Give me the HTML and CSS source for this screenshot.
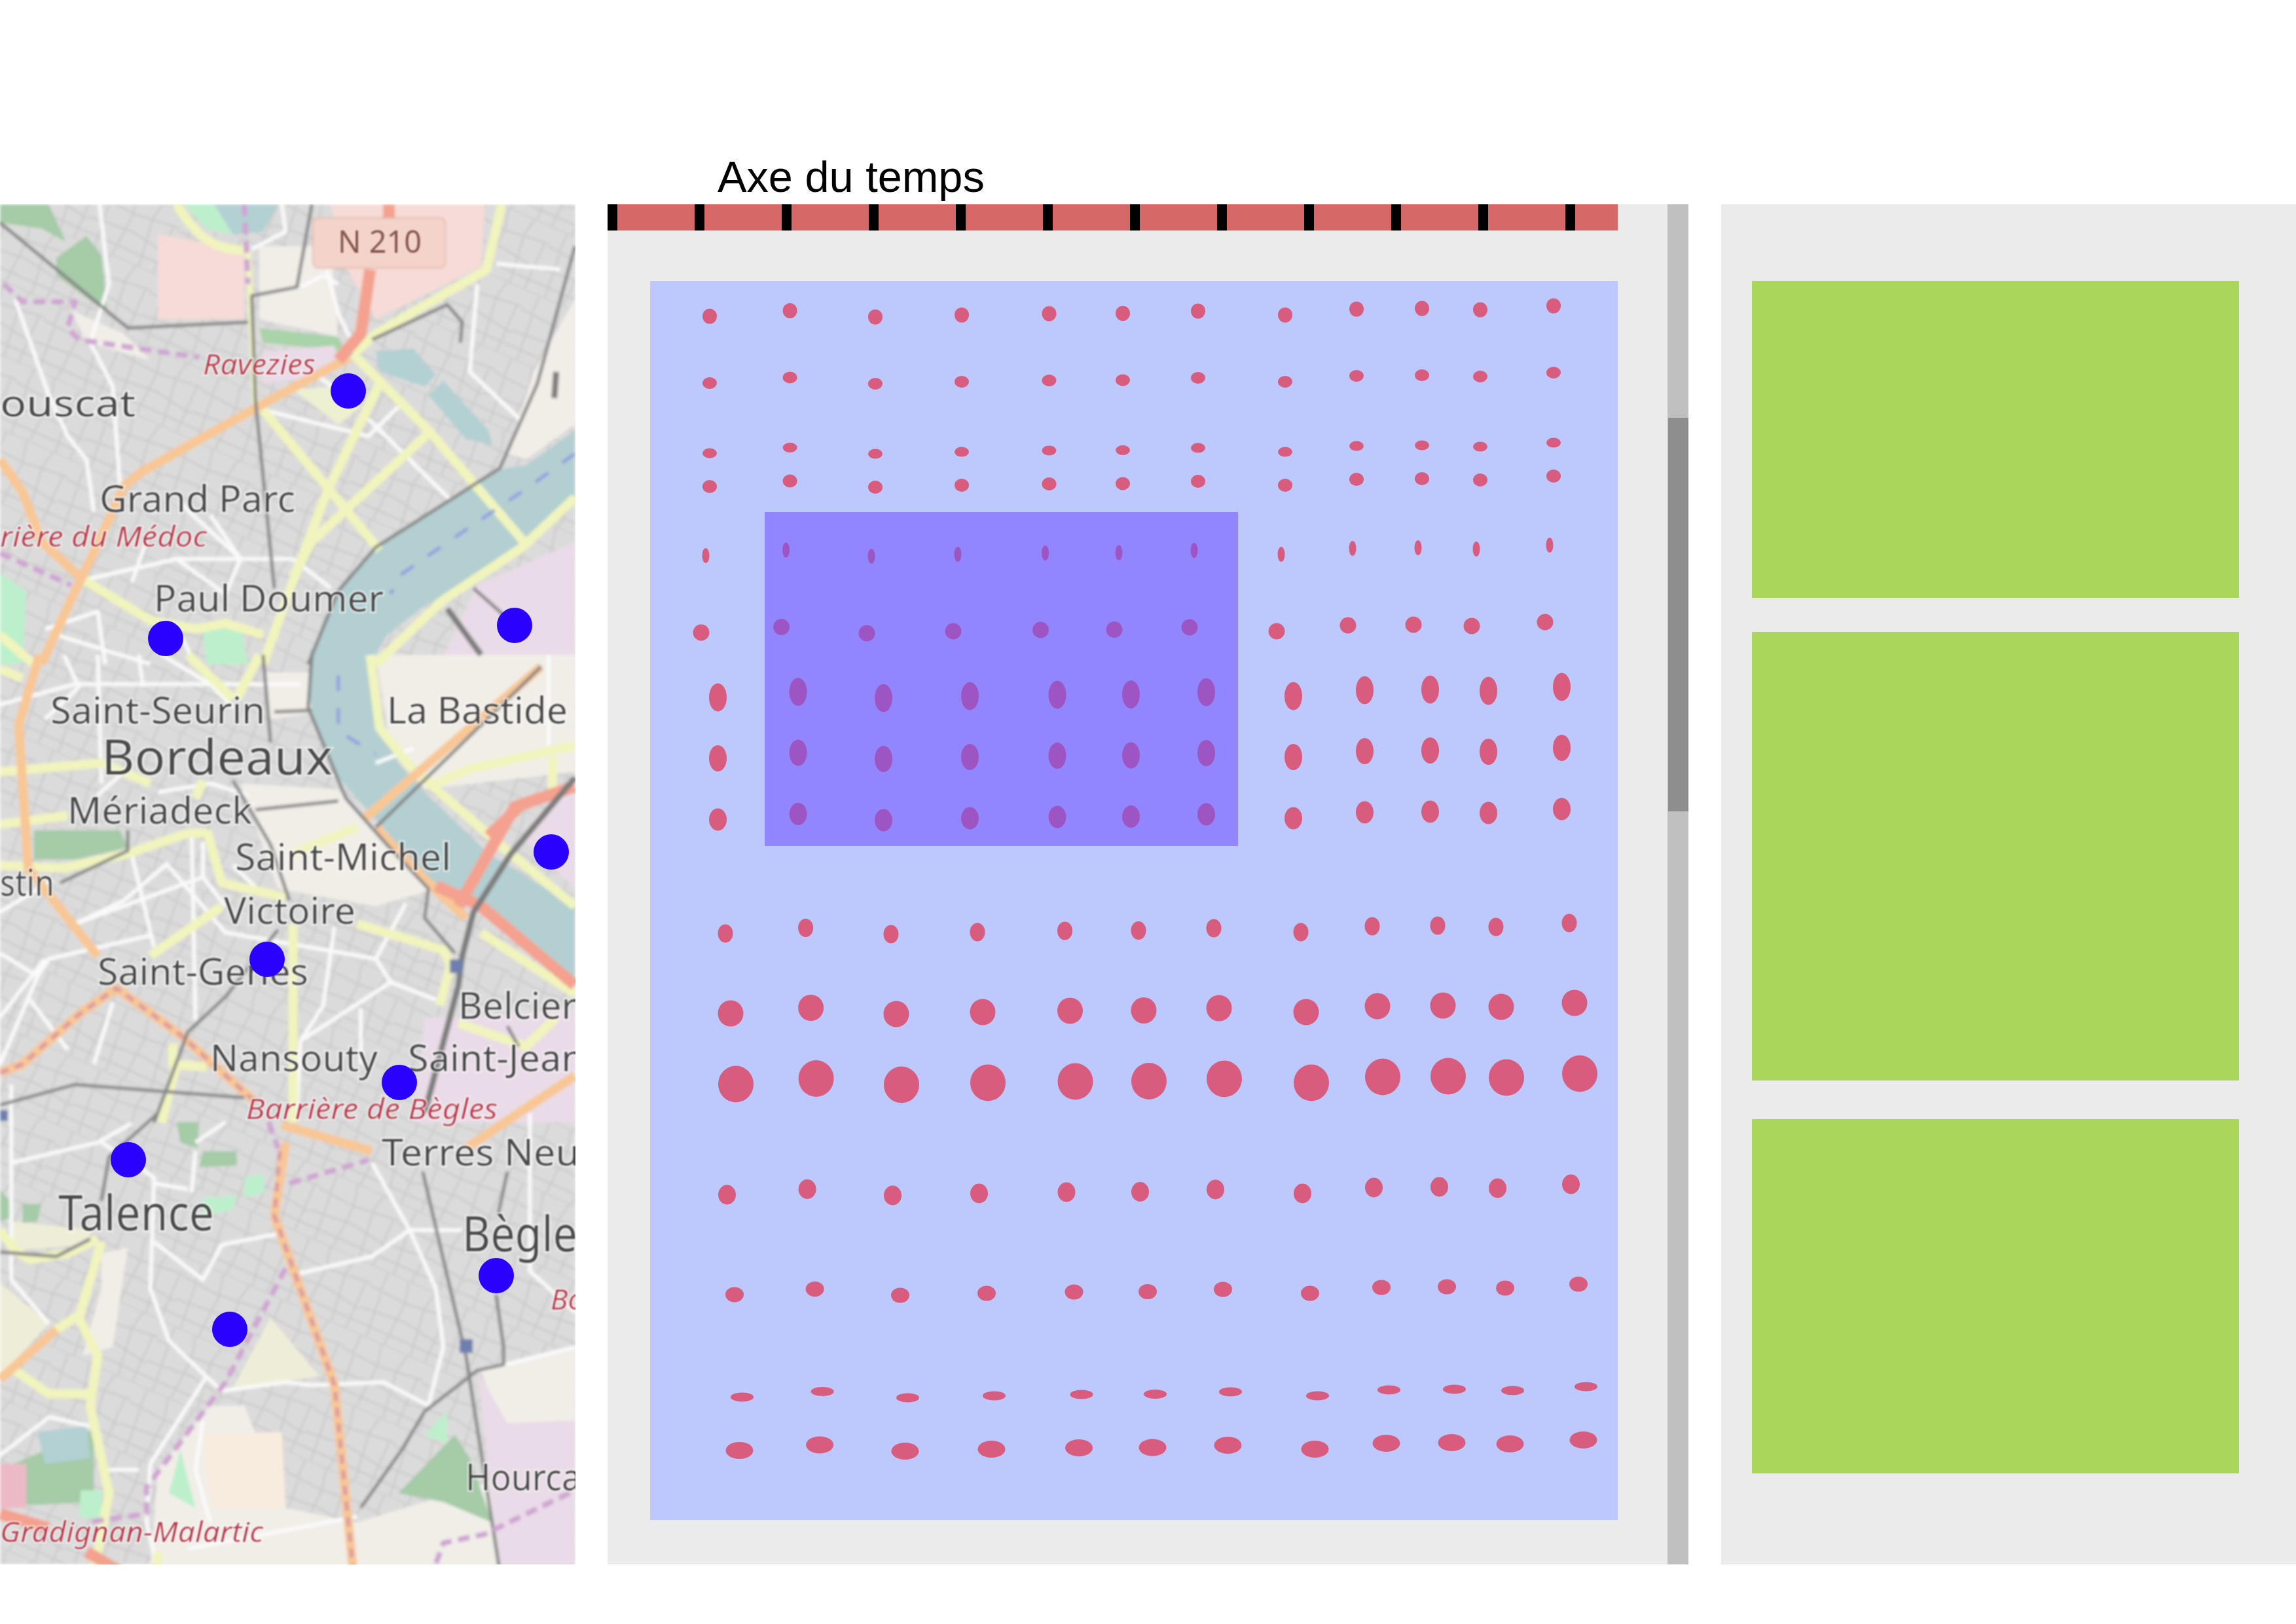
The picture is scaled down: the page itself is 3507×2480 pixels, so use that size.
FILE: index.html
```html
<!DOCTYPE html>
<html lang="fr">
<head>
    <meta charset="UTF-8">
    <title>Axe du temps</title>
    <link rel="stylesheet" href="styles.css">
</head>
<body>
    <header class="top">
        <h1 class="axis-title">Axe du temps</h1>
    </header>
    <main class="board">
        <section class="map">
            <svg class="map-svg" viewBox="0 0 879 2077" width="879" height="2077">
                <defs>
                    <filter id="soft" x="0" y="0" width="100%" height="100%"><feGaussianBlur stdDeviation="2.2"/></filter>
                    <filter id="soft-text" x="-5%" y="-5%" width="110%" height="110%"><feGaussianBlur stdDeviation="1.1"/></filter>
                    <pattern id="blocks" width="132" height="104" patternUnits="userSpaceOnUse" patternTransform="rotate(24)">
                        <path class="block-line" d="M0 0H132M0 30L60 34L132 26M0 66L70 60L132 70M18 0V30M52 0L60 34L56 104M96 0L90 28L100 104M20 34L26 104M124 26V104M0 88H132"/>
                    </pattern>
                </defs>

                <g filter="url(#soft)">
                    <rect class="land" width="879" height="2077"/>
                    <rect class="land-blocks" width="879" height="2077"/>

                    <!-- areas, top part -->
                    <g transform="matrix(.574 0 0 .4464 0 -12)">
                        <path class="a-forest" d="M150 210L230 135L270 200L285 380L270 385L150 270Z"/>
                        <path class="a-forest" d="M0 27H130L175 155L110 110L0 90Z"/>
                        <path class="a-mint" d="M490 27H570L620 130L550 110Z"/>
                        <path class="a-water" d="M570 27H740L700 120L620 130Z"/>
                        <path class="a-pink" d="M420 130L650 180V420L420 420Z"/>
                        <path class="a-pink" d="M880 27H1290L1280 240L1000 420L920 240Z"/>
                        <path class="a-paper" d="M690 170L880 170L900 480L690 420Z"/>
                        <path class="a-paper" d="M190 390L330 470L400 560L230 500Z"/>
                        <path class="a-green" d="M690 450L900 480L920 530L700 500Z"/>
                        <path class="a-lilac" d="M700 530L890 510L900 570L840 620L700 640Z"/>
                        <path class="a-paper" d="M1420 600L1530 350V780L1400 900L1350 880Z"/>
                        <path class="a-water" d="M1000 530L1100 520L1160 610L1130 650L1010 600Z"/>
                        <path class="a-water" d="M1180 630L1300 800L1310 850L1240 830L1140 680Z"/>
                        <path class="a-river" d="M1530 800L1400 920L1340 930L1200 1040L1030 1170L920 1310L860 1450L825 1600H985L1030 1500L1130 1400L1280 1290L1400 1190L1530 1020Z"/>
                        <path class="a-lilac" d="M1270 1330L1530 1180V1600H1170Z"/>
                        <path class="a-mint" d="M0 1290L70 1350L60 1600H0Z"/>
                        <path class="a-mint" d="M540 1490L640 1470L660 1600H550Z"/>
                        <path class="a-lime" d="M780 660L900 650L960 720L900 780Z"/>
                    </g>

                    <!-- areas, middle part -->
                    <g transform="matrix(.574 0 0 .4464 0 688)">
                        <path class="a-paper" d="M1000 0H1530V400L1130 460L1040 320Z"/>
                        <path class="a-paper" d="M640 440L900 460L1020 620L1160 800L1000 860L740 800Z"/>
                        <path class="a-paper" d="M700 60L820 60L830 200L720 220Z"/>
                        <path class="a-forest" d="M90 600H320L340 660L200 700H90Z"/>
                        <path class="a-river" d="M825 -20H985C975 100 1000 220 1060 370L1130 470L1300 680L1530 860V1130L1290 870L1240 860L1140 780L1020 590L900 420L840 250L820 120Z"/>
                        <path class="a-lilac" d="M1420 560L1530 440V800L1400 640Z"/>
                        <path class="a-lilac" d="M1130 1240L1220 1240L1530 1210V1600H1100Z"/>
                    </g>

                    <!-- areas, bottom part -->
                    <g transform="matrix(.574 0 0 .4464 0 1388)">
                        <path class="a-paper" d="M560 1000H650L760 1350L950 1400V1568H400L420 1220Z"/>
                        <path class="a-ivory" d="M620 940L720 700L850 900Z"/>
                        <path class="a-peach" d="M540 1100L750 1090L760 1350L560 1350Z"/>
                        <path class="a-paper" d="M950 1400L1330 1250V1568H950Z"/>
                        <path class="a-paper" d="M1280 880L1530 800V1080L1330 1060Z"/>
                        <path class="a-lilac" d="M1270 880L1350 1060L1530 1050V1568H1330Z"/>
                        <path class="a-forest" d="M0 1220L250 1080L250 1330L90 1340L0 1340Z"/>
                        <path class="a-forest" d="M1060 1300L1210 1100L1250 1180L1310 1400L1180 1330Z"/>
                        <path class="a-mint" d="M1130 1100L1190 1020V1130Z"/>
                        <path class="a-mint" d="M480 1150L520 1350L450 1300Z"/>
                        <path class="a-mint" d="M540 290L630 280L620 330L540 350Z"/>
                        <path class="a-mint" d="M650 220L700 205L705 270L650 290Z"/>
                        <path class="a-mint" d="M215 1290L270 1290L270 1390L210 1380Z"/>
                        <path class="a-rose" d="M0 1200H70V1350H0Z"/>
                        <path class="a-ivory" d="M0 580L130 720L0 900Z"/>
                        <path class="a-ivory" d="M30 370L250 400L220 450L30 470Z"/>
                        <path class="a-paper" d="M270 480L340 460L300 800L220 830L270 600Z"/>
                        <path class="a-forest" d="M0 260L25 300L25 360L0 370Z"/>
                        <path class="a-forest" d="M60 310L110 310L100 370L60 375Z"/>
                        <path class="a-water" d="M100 1090L230 1070L240 1180L120 1200Z"/>
                        <path class="a-forest" d="M540 130L630 130L630 180L530 185Z"/>
                        <path class="a-forest" d="M470 30L530 30L525 120L480 100Z"/>
                    </g>

                    <!-- streets -->
                    <g class="streets" transform="matrix(.574 0 0 .4464 0 -12)">
                        <path d="M265 27L290 300L240 500L300 650L320 1000"/>
                        <path d="M40 350L130 680L180 820L230 900L250 1080"/>
                        <path d="M700 730L980 820L1060 720"/>
                        <path d="M980 760L1200 1040"/>
                        <path d="M1320 230L1490 250"/>
                        <path d="M1270 300L1250 600L1390 770"/>
                        <path d="M840 610L930 690"/>
                        <path d="M230 1310L470 1240H780"/>
                        <path d="M470 1240L600 1360L640 1240L480 1050"/>
                        <path d="M870 250L900 400L930 480"/>
                        <path d="M400 1600L150 1500"/>
                        <path d="M780 1240L880 1340"/>
                        <path d="M670 180L760 120L750 27"/>
                        <path d="M800 310L860 270L900 300"/>
                        <path d="M390 1180L350 1320"/>
                        <path d="M560 1090L640 1240"/>
                        <path d="M120 1480L260 1420L280 1600"/>
                        <path d="M480 1500L520 1600"/>
                    </g>
                    <g class="streets" transform="matrix(.574 0 0 .4464 0 688)">
                        <path d="M260 0L270 440"/>
                        <path d="M370 0L380 110"/>
                        <path d="M0 170L200 100H800"/>
                        <path d="M350 680L410 1000"/>
                        <path d="M540 640V760L200 920"/>
                        <path d="M440 710L600 950L1000 1040L1040 1120L1160 1180"/>
                        <path d="M1040 1120L800 1320"/>
                        <path d="M120 1040L0 1240"/>
                        <path d="M0 1020L100 1100L130 1040L400 960"/>
                        <path d="M510 600L520 1250"/>
                        <path d="M1000 1040L1080 850"/>
                        <path d="M890 930L860 1200L800 1320"/>
                        <path d="M1100 320L1000 370"/>
                        <path d="M960 1210V1400"/>
                        <path d="M30 1470V1600"/>
                        <path d="M430 0L560 100L620 180"/>
                        <path d="M330 400L260 480"/>
                        <path d="M440 720L330 840L200 920"/>
                        <path d="M1460 0V310"/>
                        <path d="M0 1400L120 1040"/>
                        <path d="M170 0L210 110L120 220"/>
                        <path d="M420 470L560 440L660 480"/>
                        <path d="M0 880L140 770"/>
                        <path d="M620 720L700 820"/>
                        <path d="M540 760L600 860"/>
                        <path d="M800 1320L790 1568"/>
                        <path d="M300 1190L250 1400"/>
                        <path d="M80 1180L180 1350"/>
                    </g>
                    <g class="streets" transform="matrix(.574 0 0 .4464 0 1388)">
                        <path d="M30 0V570L130 720"/>
                        <path d="M30 170L260 100L350 35"/>
                        <path d="M270 100L410 220L400 600L450 780L590 950"/>
                        <path d="M410 240L500 260"/>
                        <path d="M410 440L540 570L590 450L750 410"/>
                        <path d="M520 100L600 30"/>
                        <path d="M510 270L520 130"/>
                        <path d="M990 170L1090 400L1160 600L1180 800L1140 1000"/>
                        <path d="M1090 400L990 490L790 550"/>
                        <path d="M1090 400H1230"/>
                        <path d="M590 950L760 920L830 930L1020 920L1140 1000"/>
                        <path d="M550 900L400 1200L390 1400L420 1568"/>
                        <path d="M540 1050L520 1220L560 1400"/>
                        <path d="M0 1170L130 1040L240 1070"/>
                        <path d="M280 1220H370"/>
                        <path d="M500 1490L950 1380"/>
                        <path d="M1280 880L1530 800"/>
                        <path d="M1410 0V540L1530 680"/>
                    </g>

                    <!-- main roads -->
                    <g class="rd-yellow" transform="matrix(.574 0 0 .4464 0 -12)">
                        <path d="M470 27C520 130 560 180 650 185"/>
                        <path class="thin" d="M660 185L680 730"/>
                        <path d="M1335 27L1295 250L1000 470L940 540"/>
                        <path d="M940 540L1140 800L1400 1190"/>
                        <path d="M700 730L1010 1210"/>
                        <path d="M1010 640L870 1010L770 1350L700 1600"/>
                        <path d="M1140 810L830 1180L780 1300"/>
                        <path d="M1530 1030L1390 1200L1180 1380L1000 1600"/>
                        <path d="M220 1310L400 1450L520 1480L600 1460L700 1500"/>
                        <path d="M0 1500L90 1600"/>
                    </g>
                    <g class="rd-yellow" transform="matrix(.574 0 0 .4464 0 688)">
                        <path d="M500 0L620 150"/>
                        <path d="M690 0L630 150"/>
                        <path d="M0 50L60 80"/>
                        <path d="M0 400L270 370L400 440"/>
                        <path d="M0 580L180 550"/>
                        <path d="M0 720L170 730L340 680L500 610H550"/>
                        <path d="M550 600L590 780L760 830"/>
                        <path d="M400 1030L590 860"/>
                        <path d="M950 920L1180 1010L1200 1060L1170 1200"/>
                        <path d="M780 920V1600"/>
                        <path d="M780 680L950 590"/>
                        <path d="M985 0L1010 250L1090 380L1340 660L1530 860"/>
                        <path d="M1140 450L1250 390L1530 310"/>
                        <path d="M1470 350V470"/>
                        <path d="M1280 950L1530 1160"/>
                        <path d="M1220 1260L1400 1340L1480 1240"/>
                        <path d="M460 1330V1400L550 1410"/>
                        <path d="M430 1600L470 1400"/>
                        <path d="M540 430L520 490"/>
                    </g>
                    <g class="rd-yellow" transform="matrix(.574 0 0 .4464 0 1388)">
                        <path d="M0 400L40 470L80 500L180 480L260 430"/>
                        <path d="M270 440L210 700L260 830L240 1000L290 1300L250 1568"/>
                        <path d="M40 880L130 960H240"/>
                        <path d="M150 740L210 690"/>
                        <path d="M420 1500V1568"/>
                    </g>

                    <g class="rd-orange" transform="matrix(.574 0 0 .4464 0 -12)">
                        <path d="M930 550L700 710L380 940L330 990L260 1190L200 1350L110 1600"/>
                        <path d="M0 900L60 1010L110 1180L220 1310"/>
                    </g>
                    <g class="rd-orange" transform="matrix(.574 0 0 .4464 0 688)">
                        <path d="M105 0L50 240L75 730L260 1030"/>
                        <path class="inner" d="M0 1430L60 1400L210 1230L310 1140L480 1300L680 1530"/>
                        <path d="M1440 40L970 560"/>
                        <path d="M1000 590L1140 780L1240 900"/>
                        <path d="M1380 1568L1530 1440"/>
                    </g>
                    <g class="rd-orange" transform="matrix(.574 0 0 .4464 0 1388)">
                        <path d="M750 40L990 130"/>
                        <path d="M760 100L730 350L890 930L940 1568"/>
                        <path d="M0 910L150 740"/>
                        <path d="M1240 120L1380 0"/>
                    </g>
                    <g class="rd-dash" transform="matrix(.574 0 0 .4464 0 1388)">
                        <path d="M745 130L730 350L890 930L940 1568"/>
                    </g>
                    <g class="rd-dash" transform="matrix(.574 0 0 .4464 0 688)">
                        <path d="M0 1430L60 1400L210 1230L310 1140L480 1300L680 1530"/>
                    </g>

                    <g class="rd-salmon" transform="matrix(.574 0 0 .4464 0 -12)">
                        <path d="M1035 27V80"/>
                        <path d="M985 250L960 470L900 560"/>
                    </g>
                    <g class="rd-salmon" transform="matrix(.574 0 0 .4464 0 688)">
                        <path d="M1530 450L1370 520L1220 860"/>
                        <path d="M1390 510L1300 620"/>
                        <path d="M1160 790L1280 860L1530 1130"/>
                    </g>
                    <g class="rd-salmon" transform="matrix(.574 0 0 .4464 0 1388)">
                        <path d="M0 1370L130 1420"/>
                        <path d="M230 1500L320 1568"/>
                    </g>

                    <!-- rail and tram -->
                    <g class="rail" transform="matrix(.574 0 0 .4464 0 -12)">
                        <path d="M0 90L340 450L660 430"/>
                        <path d="M830 27L790 310L670 340L680 700L730 1340"/>
                        <path d="M990 490L1190 370L1230 430L1225 500"/>
                        <path d="M1530 170L1430 640L1330 930L1000 1200L900 1350L820 1600"/>
                        <path d="M1260 1340L1400 1500"/>
                        <path class="thick" d="M1190 1410L1280 1568"/>
                        <path class="thick" d="M1480 600L1475 690"/>
                    </g>
                    <g class="rail" transform="matrix(.574 0 0 .4464 0 688)">
                        <path class="thick" d="M1530 420L1360 680L1260 880L1230 1030L1220 1130L1130 1568"/>
                        <path d="M830 0L820 180L920 490L1030 650L1140 800L1130 900L1210 1020"/>
                        <path d="M700 0L720 300"/>
                        <path d="M620 430L720 650L770 840"/>
                        <path d="M340 600V670L160 780"/>
                        <path d="M680 530L900 500"/>
                        <path d="M0 1540L200 1470L650 1515"/>
                        <path d="M740 940L600 1170L500 1290L410 1600"/>
                        <path d="M730 195L830 190"/>
                        <path d="M1000 590L1440 40"/>
                        <path d="M1350 1270L1380 1340"/>
                    </g>
                    <g class="rail" transform="matrix(.574 0 0 .4464 0 1388)">
                        <path d="M420 0L290 150L270 300"/>
                        <path d="M0 475L150 490L240 430"/>
                        <path d="M1125 200L1240 830L1330 1568"/>
                        <path d="M1350 200L1325 350"/>
                        <path d="M1320 620L1340 800V860L1270 880L1130 1020L1070 1150L960 1350"/>
                    </g>

                    <g class="tram" transform="matrix(.574 0 0 .4464 0 -12)">
                        <path d="M10 300L60 360H200L180 450L210 490L420 530L530 550"/>
                        <path d="M0 1220L190 1330"/>
                        <path d="M650 27L660 300"/>
                    </g>
                    <g class="tram" transform="matrix(.574 0 0 .4464 0 1388)">
                        <path d="M715 30L740 120"/>
                        <path d="M770 240L980 160"/>
                        <path d="M760 530L600 920L390 1280V1370L230 1400"/>
                        <path d="M1160 1540L1180 1470L1290 1440L1530 1290"/>
                    </g>

                    <g class="river-flow" transform="matrix(.574 0 0 .4464 0 -12)">
                        <path d="M1530 880L1400 1000L1160 1210L1060 1300L1040 1360"/>
                    </g>
                    <g class="river-flow" transform="matrix(.574 0 0 .4464 0 688)">
                        <path d="M900 70V260L1000 340"/>
                    </g>

                    <rect class="stop" x="687" y="1153" width="20" height="21"/>
                    <rect class="stop" x="0" y="1383" width="12" height="17"/>
                    <rect class="stop" x="702" y="1733" width="20" height="21"/>

                    <rect class="shield" x="478" y="21" width="202" height="76" rx="8"/>
                </g>

                <g class="labels" filter="url(#soft-text)">
                    <text class="shield-text" x="580" y="74" textLength="128" lengthAdjust="spacingAndGlyphs">N 210</text>
                    <text class="place" x="207" y="324" text-anchor="end" textLength="207" lengthAdjust="spacingAndGlyphs">ouscat</text>
                    <text class="place" x="152" y="470" textLength="299" lengthAdjust="spacingAndGlyphs">Grand Parc</text>
                    <text class="place" x="235" y="622" textLength="351" lengthAdjust="spacingAndGlyphs">Paul Doumer</text>
                    <text class="place" x="77" y="793" textLength="328" lengthAdjust="spacingAndGlyphs">Saint-Seurin</text>
                    <text class="place" x="591" y="793" textLength="276" lengthAdjust="spacingAndGlyphs">La Bastide</text>
                    <text class="place big" x="155" y="871" textLength="353" lengthAdjust="spacingAndGlyphs">Bordeaux</text>
                    <text class="place" x="103" y="946" textLength="282" lengthAdjust="spacingAndGlyphs">Mériadeck</text>
                    <text class="place" x="359" y="1017" textLength="330" lengthAdjust="spacingAndGlyphs">Saint-Michel</text>
                    <text class="place" x="0" y="1056" textLength="83" lengthAdjust="spacingAndGlyphs">stin</text>
                    <text class="place" x="342" y="1099" textLength="201" lengthAdjust="spacingAndGlyphs">Victoire</text>
                    <text class="place" x="149" y="1192" textLength="322" lengthAdjust="spacingAndGlyphs">Saint-Genès</text>
                    <text class="place" x="700" y="1244" textLength="181" lengthAdjust="spacingAndGlyphs">Belcier</text>
                    <text class="place" x="321" y="1324" textLength="256" lengthAdjust="spacingAndGlyphs">Nansouty</text>
                    <text class="place" x="623" y="1324" textLength="270" lengthAdjust="spacingAndGlyphs">Saint-Jean</text>
                    <text class="place" x="583" y="1468" textLength="302" lengthAdjust="spacingAndGlyphs">Terres Neu</text>
                    <text class="place big" x="89" y="1567" textLength="238" lengthAdjust="spacingAndGlyphs">Talence</text>
                    <text class="place big" x="706" y="1599" textLength="176" lengthAdjust="spacingAndGlyphs">Bègle</text>
                    <text class="place" x="711" y="1964" textLength="176" lengthAdjust="spacingAndGlyphs">Hourca</text>
                    <text class="station" x="310" y="260" textLength="172" lengthAdjust="spacingAndGlyphs">Ravezies</text>
                    <text class="station" x="0" y="523" textLength="316" lengthAdjust="spacingAndGlyphs">rière du Médoc</text>
                    <text class="station" x="376" y="1397" textLength="384" lengthAdjust="spacingAndGlyphs">Barrière de Bègles</text>
                    <text class="station" x="841" y="1688">Bo</text>
                    <text class="station" x="0" y="2043" textLength="402" lengthAdjust="spacingAndGlyphs">Gradignan-Malartic</text>
                </g>

                <circle class="pin" cx="532" cy="285" r="27"/>
                <circle class="pin" cx="253" cy="663" r="27"/>
                <circle class="pin" cx="786" cy="643" r="27"/>
                <circle class="pin" cx="842" cy="989" r="27"/>
                <circle class="pin" cx="408" cy="1153" r="27"/>
                <circle class="pin" cx="610" cy="1341" r="27"/>
                <circle class="pin" cx="196" cy="1459" r="27"/>
                <circle class="pin" cx="758" cy="1636" r="27"/>
                <circle class="pin" cx="351" cy="1718" r="27"/>
            </svg>
        </section>

        <section class="timeline">
            <div class="axis">
                <span class="tick"></span><span class="tick"></span><span class="tick"></span><span class="tick"></span>
                <span class="tick"></span><span class="tick"></span><span class="tick"></span><span class="tick"></span>
                <span class="tick"></span><span class="tick"></span><span class="tick"></span><span class="tick"></span>
            </div>
            <div class="plot">
                <svg class="glyphs" viewBox="0 0 1478 1892" width="1478" height="1892">
                    <defs>
                        <g id="col">
                            <ellipse cx="91" cy="54" rx="11" ry="11.5"/>
                            <ellipse cx="91" cy="156" rx="11" ry="9"/>
                            <ellipse cx="91" cy="263" rx="11" ry="7.5"/>
                            <ellipse cx="91" cy="314" rx="11" ry="10"/>
                            <ellipse cx="85" cy="419.5" rx="5.5" ry="11.5"/>
                            <ellipse cx="78" cy="537" rx="12.5" ry="12.5"/>
                            <ellipse cx="103.5" cy="636" rx="13.5" ry="21.5"/>
                            <ellipse cx="103.5" cy="729" rx="13.5" ry="20"/>
                            <ellipse cx="103.5" cy="822.5" rx="13.5" ry="17"/>
                            <ellipse cx="115" cy="996.5" rx="11.5" ry="14"/>
                            <ellipse cx="123" cy="1118.5" rx="19.5" ry="20"/>
                            <ellipse cx="131" cy="1226.5" rx="27" ry="28"/>
                            <ellipse cx="117.5" cy="1395.5" rx="13.5" ry="15"/>
                            <ellipse cx="129" cy="1548" rx="14" ry="11.5"/>
                            <ellipse cx="140.5" cy="1704.5" rx="17.5" ry="7"/>
                            <ellipse cx="136.5" cy="1786" rx="21" ry="13"/>
                        </g>
                    </defs>
                    <use href="#col" x="0" y="0"/>
                    <use href="#col" x="122.6" y="-8.5"/>
                    <use href="#col" x="253" y="1"/>
                    <use href="#col" x="385" y="-2"/>
                    <use href="#col" x="518.5" y="-4"/>
                    <use href="#col" x="631" y="-4.5"/>
                    <use href="#col" x="746" y="-8"/>
                    <use href="#col" x="879" y="-2"/>
                    <use href="#col" x="988" y="-11"/>
                    <use href="#col" x="1088" y="-12"/>
                    <use href="#col" x="1177" y="-10"/>
                    <use href="#col" x="1289" y="-16"/>
                </svg>
                <div class="selection"></div>
            </div>
        </section>

        <div class="scrollbar"><div class="thumb"></div></div>

        <aside class="side">
            <div class="card card-a"></div>
            <div class="card card-b"></div>
            <div class="card card-c"></div>
        </aside>
    </main>
</body>
</html>
```

FILE: styles.css
```css
body {
    margin: 0;
    background: #fff;
    font-family: "Liberation Sans", Arial, sans-serif;
}
.top {
    height: 312px;
    display: flex;
    align-items: flex-end;
}
.axis-title {
    margin: 0 0 8px 1096px;
    font-size: 66.7px;
    font-weight: normal;
    line-height: 1;
    color: #000;
}
.board {
    display: flex;
    height: 2077px;
}

/* map */
.map {
    width: 879px;
    flex: none;
}
.map-svg {
    display: block;
}
.land { fill: #dcdbdb; }
.land-blocks { fill: url(#blocks); }
.block-line {
    fill: none;
    stroke: #cbc9c9;
    stroke-width: 2.5;
}
.a-forest { fill: #a5cba7; }
.a-mint { fill: #bcf0cc; }
.a-water { fill: #b3d0d3; }
.a-river { fill: #b3cfd1; }
.a-pink { fill: #f6dbd8; }
.a-paper { fill: #f1eee8; }
.a-green { fill: #a9d3a8; }
.a-lilac { fill: #e9dbe7; }
.a-lime { fill: #eef0d2; }
.a-ivory { fill: #eeeed8; }
.a-peach { fill: #f8ecdf; }
.a-rose { fill: #ecb9c6; }

.streets path, .rd-yellow path, .rd-orange path, .rd-salmon path,
.rd-dash path, .rail path, .tram path, .river-flow path {
    fill: none;
    stroke-linejoin: round;
    vector-effect: non-scaling-stroke;
}
.streets path { stroke: #fafafa; stroke-width: 6px; }
.rd-yellow path { stroke: #f1f4bd; stroke-width: 14px; }
.rd-yellow path.thin { stroke-width: 9px; }
.rd-orange path { stroke: #f8c795; stroke-width: 14px; }
.rd-dash path { stroke: #dc9aa0; stroke-width: 6px; stroke-dasharray: 14 10; }
.rd-salmon path { stroke: #f4a18f; stroke-width: 18px; }
.rail path { stroke: #858585; stroke-width: 5px; }
.rail path.thick { stroke-width: 9px; stroke: #7d7d7d; }
.tram path { stroke: #cfa4d2; stroke-width: 8px; stroke-dasharray: 18 10; }
.river-flow path { stroke: #8f9fe0; stroke-width: 5px; stroke-dasharray: 24 26; }
.stop { fill: #6e7fae; }
.shield {
    fill: #f4d4ca;
    stroke: #e3b5a6;
    stroke-width: 2;
}
.shield-text {
    font-family: "Noto Sans", sans-serif;
    font-size: 48px;
    fill: #85594f;
    text-anchor: middle;
}
.place {
    font-family: "Noto Sans", sans-serif;
    font-size: 56px;
    fill: #4b4b4b;
    stroke: rgba(255, 255, 255, .5);
    stroke-width: 5px;
    paint-order: stroke;
}
.place.big { font-size: 74px; }
.station {
    font-family: "Noto Sans", sans-serif;
    font-size: 44px;
    font-style: italic;
    fill: #bd3b50;
    stroke: rgba(255, 255, 255, .5);
    stroke-width: 4px;
    paint-order: stroke;
}
.pin { fill: #2a00ff; }

/* time axis and glyph plot */
.timeline {
    width: 1619px;
    flex: none;
    margin-left: 49px;
    background: #ebebeb;
}
.axis {
    width: 1543px;
    height: 40px;
    display: flex;
    gap: 118px;
    background: #d76868;
}
.tick {
    width: 15px;
    flex: none;
    background: #000;
}
.plot {
    position: relative;
    width: 1478px;
    height: 1892px;
    margin: 77px 0 0 65px;
    background: #bdc8fd;
}
.glyphs {
    display: block;
    fill: #d85c7d;
}
.selection {
    position: absolute;
    left: 175px;
    top: 353px;
    width: 723px;
    height: 510px;
    background: rgba(112, 81, 255, .55);
}

.scrollbar {
    width: 32px;
    flex: none;
    padding-top: 326px;
    box-sizing: border-box;
    background: #c0c0c0;
}
.thumb {
    height: 601px;
    margin-left: 1px;
    background: #8e8e8e;
}

/* right column */
.side {
    flex: 1;
    margin-left: 50px;
    padding: 117px 87px 0 47px;
    background: #ebebeb;
}
.card { background: #aad65c; }
.card-a { height: 484px; }
.card-b { height: 685px; margin-top: 52px; }
.card-c { height: 541px; margin-top: 59px; }
```
